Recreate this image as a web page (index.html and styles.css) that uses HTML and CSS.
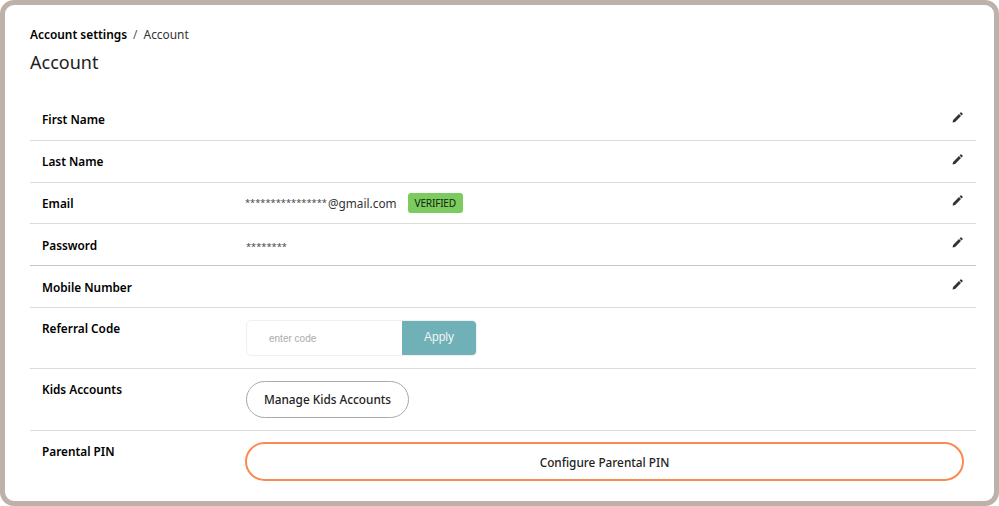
FILE: index.html
```html
<!DOCTYPE html>
<html lang="en">
<head>
<meta charset="utf-8">
<title>Account</title>
<link rel="stylesheet" href="styles.css">
</head>
<body>
<main class="frame">
  <nav class="crumbs"><b>Account settings</b><span class="sep">/</span><span>Account</span></nav>
  <h1 class="title">Account</h1>
  <section class="rows">
    <div class="row short"><div class="label">First Name</div><div class="value"></div>
      <svg class="pen" viewBox="0 0 12 12"><path d="M0.6 11.4 1.2 8.6 7.6 2.2 9.8 4.4 3.4 10.8ZM8.3 1.5 9.3 0.5Q9.8 0.1 10.3 0.5L11.5 1.7Q11.9 2.2 11.5 2.7L10.5 3.7Z"/></svg></div>
    <div class="row short"><div class="label">Last Name</div><div class="value"></div>
      <svg class="pen" viewBox="0 0 12 12"><path d="M0.6 11.4 1.2 8.6 7.6 2.2 9.8 4.4 3.4 10.8ZM8.3 1.5 9.3 0.5Q9.8 0.1 10.3 0.5L11.5 1.7Q11.9 2.2 11.5 2.7L10.5 3.7Z"/></svg></div>
    <div class="row short"><div class="label">Email</div><div class="value email"><span class="stars">****************</span><span>@gmail.com</span><span class="badge">VERIFIED</span></div>
      <svg class="pen" viewBox="0 0 12 12"><path d="M0.6 11.4 1.2 8.6 7.6 2.2 9.8 4.4 3.4 10.8ZM8.3 1.5 9.3 0.5Q9.8 0.1 10.3 0.5L11.5 1.7Q11.9 2.2 11.5 2.7L10.5 3.7Z"/></svg></div>
    <div class="row short strong"><div class="label">Password</div><div class="value"><span class="stars">********</span></div>
      <svg class="pen" viewBox="0 0 12 12"><path d="M0.6 11.4 1.2 8.6 7.6 2.2 9.8 4.4 3.4 10.8ZM8.3 1.5 9.3 0.5Q9.8 0.1 10.3 0.5L11.5 1.7Q11.9 2.2 11.5 2.7L10.5 3.7Z"/></svg></div>
    <div class="row short"><div class="label">Mobile Number</div><div class="value"></div>
      <svg class="pen" viewBox="0 0 12 12"><path d="M0.6 11.4 1.2 8.6 7.6 2.2 9.8 4.4 3.4 10.8ZM8.3 1.5 9.3 0.5Q9.8 0.1 10.3 0.5L11.5 1.7Q11.9 2.2 11.5 2.7L10.5 3.7Z"/></svg></div>
    <div class="row tall refer"><div class="label">Referral Code</div><div class="value">
      <div class="code"><span class="hint">enter code</span><span class="apply">Apply</span></div></div></div>
    <div class="row tall kids"><div class="label">Kids Accounts</div><div class="value"><button class="btn-kids">Manage Kids Accounts</button></div></div>
    <div class="row tall last"><div class="label">Parental PIN</div><div class="value"><button class="btn-pin">Configure Parental PIN</button></div></div>
  </section>
</main>
</body>
</html>
```
FILE: styles.css
```css
* { box-sizing: border-box; }
html, body { margin: 0; height: 100%; background: #fff; }
body { font-family: "Noto Sans", "Open Sans", sans-serif; color: #111; overflow: hidden; }
.frame { width: 999px; height: 506px; border: 5px solid #bdb2a9; border-radius: 14px; padding: 21px 18px 0 25px; background: #fff; }
.crumbs { font-size: 11.9px; line-height: 17px; color: #333; display: flex; }
.crumbs b { font-weight: 600; color: #000; }
.sep { margin: 0 6px; color: #555; }
.title { font-size: 18px; font-weight: 400; line-height: 24px; margin: 7px 0 0; color: #222; }
.rows { margin-top: 25px; }
.row { display: flex; border-bottom: 1px solid #dedbd6; padding-left: 12px; }
.row.strong { border-bottom-color: #c9c5c1; }
.row.short { height: 41.8px; align-items: center; }
.row.tall { padding-top: 12px; }
.row.last { border-bottom: 0; }
.label { width: 204px; flex: none; font-size: 11.8px; font-weight: 600; color: #000; }
.value { flex: 1; font-size: 11.8px; color: #333; }
.email { display: flex; align-items: center; margin-left: -1px; }
.stars { font-size: 9.3px; margin-right: 1px; color: #444; }
.badge { background: #7ccb5f; border-radius: 3px; font-size: 10.2px; letter-spacing: -0.25px; height: 20px; line-height: 20px; padding: 0 7px; margin-left: 11px; color: #14260e; }
.pen { width: 11px; height: 11px; fill: #333; margin-right: 13px; flex: none; margin-top: -4px; }
.code { display: flex; width: 231px; height: 36px; border: 1px solid #f0f0f0; border-radius: 5px; overflow: hidden; }
.hint { width: 155px; padding-left: 22px; font-family: "Liberation Sans", sans-serif; font-size: 10px; line-height: 35px; color: #aaa; }
.apply { flex: 1; background: #70b1b7; color: #eef6f6; text-align: center; font-family: "Liberation Sans", sans-serif; font-size: 12px; line-height: 33px; }
.refer { height: 61px; }
.row.kids { height: 62px; }
button { font-family: inherit; background: #fff; cursor: pointer; color: #222; font-weight: 500; }
.btn-kids { width: 163px; height: 37px; border: 1px solid #aaa; border-radius: 19px; font-size: 11.8px; padding-top: 1px; }
.btn-pin { width: 719px; height: 39px; border: 2px solid #fb8a50; border-radius: 20px; font-size: 11.8px; display: block; margin: -1px 0 0 -1px; padding-top: 2px; }
```
